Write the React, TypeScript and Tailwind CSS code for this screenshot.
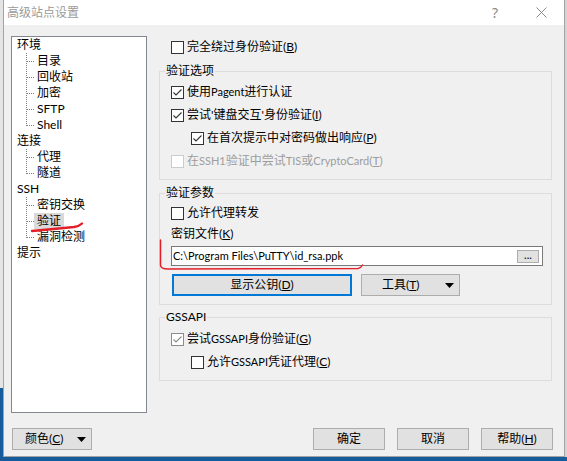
import type { ReactNode } from 'react'

const TREE = [
  { label: '环境', children: ['目录', '回收站', '加密', 'SFTP', 'Shell'] },
  { label: '连接', children: ['代理', '隧道'] },
  { label: 'SSH', children: ['密钥交换', '验证', '漏洞检测'] },
  { label: '提示', children: [] as string[] },
]

const SELECTED = '验证'

export default function App() {
  return (
    <div className="flex h-[461px] w-[567px] flex-col overflow-hidden bg-[#165c9c] font-['Lato','Noto_Sans_CJK_SC',sans-serif] text-[12px] text-black">
      <div className="flex h-[457px]">
        <div className="flex w-[3px] flex-col">
          <div className="h-[388px] bg-[#e4e4e4]" />
          <div className="flex-1 bg-[#165c9c]" />
        </div>
        <div className="flex w-[562px] flex-col border-x border-b border-[#a3a3a3] bg-[#f0f0f0]">
          <TitleBar />
          <div className="flex flex-1 flex-col pl-[7px] pr-[11px] pt-[11px]">
            <div className="flex">
              <Tree />
              <AuthPanel />
            </div>
            <div className="mt-[15px] flex items-center">
              <button
                type="button"
                className="ml-[1px] flex h-[22px] w-[80px] items-center border border-[#adadad] bg-[#e1e1e1] pl-[12px] pr-[5px]"
              >
                <span>
                  颜色(<u>C</u>)
                </span>
                <DropArrow className="ml-auto" />
              </button>
              <div className="ml-auto flex gap-[12px]">
                <DialogButton>确定</DialogButton>
                <DialogButton>取消</DialogButton>
                <DialogButton>
                  帮助(<u>H</u>)
                </DialogButton>
              </div>
            </div>
          </div>
        </div>
        <div className="flex-1 bg-[#d4d4d4]" />
      </div>
    </div>
  )
}

function TitleBar() {
  return (
    <div className="flex h-[25px] items-center bg-white">
      <span className="pl-[3px] text-[#9a9a9a]">高级站点设置</span>
      <div className="ml-auto flex h-full">
        <div className="flex w-[46px] items-center justify-center font-['Noto_Sans',sans-serif] text-[14px] text-[#8a8a8a]">?</div>
        <div className="flex w-[46px] items-center justify-center">
          <svg width="11" height="11" viewBox="0 0 11 11">
            <path d="M0.5 0.5 L10.5 10.5 M10.5 0.5 L0.5 10.5" stroke="#8a8a8a" strokeWidth="1" />
          </svg>
        </div>
      </div>
    </div>
  )
}

function Tree() {
  return (
    <div className="relative h-[377px] w-[136px] shrink-0 border border-[#828790] bg-white pl-[5px] leading-[16px]">
      {TREE.map((node) => (
        <div key={node.label}>
          <div className="h-[16px]">{node.label}</div>
          {node.children.map((child, i) => (
            <div key={child} className="flex h-[16px]">
              <Connector last={i === node.children.length - 1} />
              <span className={`px-[3px] ${child === SELECTED ? 'bg-[#d9d9d9]' : ''}`}>{child}</span>
            </div>
          ))}
        </div>
      ))}
      {/* red pen mark under the selected node */}
      <svg className="absolute left-[18px] top-[185px]" width="56" height="12" viewBox="0 0 56 12">
        <path
          d="M2 9 Q 24 6.8, 44 5 Q 49 4.4, 52 1.5"
          fill="none"
          stroke="#e3202a"
          strokeWidth="2.4"
          strokeLinecap="round"
        />
      </svg>
    </div>
  )
}

function Connector({ last }: { last: boolean }) {
  return (
    <svg width="17" height="16" viewBox="0 0 17 16" shapeRendering="crispEdges" className="shrink-0">
      <line x1="9.5" y1="0" x2="9.5" y2={last ? 9 : 16} stroke="#7f7f7f" strokeDasharray="1 1" />
      <line x1="10" y1="8.5" x2="17" y2="8.5" stroke="#7f7f7f" strokeDasharray="1 1" />
    </svg>
  )
}

// latin runs inside chinese labels render a touch smaller
function Latin({ children }: { children: ReactNode }) {
  return <span className="text-[11px]">{children}</span>
}

function AuthPanel() {
  return (
    <div className="relative ml-[12px] flex w-[393px] flex-col pt-[3px]">
      <CheckRow className="pl-[12px]">
        完全绕过身份验证(<u>B</u>)
      </CheckRow>

      <Group title="验证选项" className="mt-[8px]" bodyClassName="gap-[7px] pb-[10px] pt-[5px]">
        <CheckRow checked>
          使用<Latin>Pagent</Latin>进行认证
        </CheckRow>
        <CheckRow checked>
          尝试&apos;键盘交互&apos;身份验证(<u>I</u>)
        </CheckRow>
        <CheckRow checked className="pl-[20px]">
          在首次提示中对密码做出响应(<u>P</u>)
        </CheckRow>
        <CheckRow disabled>
          在<Latin>SSH1</Latin>验证中尝试<Latin>TIS</Latin>或<Latin>CryptoCard</Latin>(<u>T</u>)
        </CheckRow>
      </Group>

      <Group title="验证参数" className="mt-[5px]" bodyClassName="pb-[8px] pt-[4px]">
        <CheckRow>允许代理转发</CheckRow>
        <div className="mt-[5px] h-[16px] leading-[16px]">
          密钥文件(<u>K</u>)
        </div>
        <div className="mt-[4px] flex h-[20px] w-[372px] items-center border border-[#7a7a7a] bg-white pl-[1px] pr-[3px]">
          <span className="text-[11px]">C:\Program Files\PuTTY\id_rsa.ppk</span>
          <button
            type="button"
            className="ml-auto flex h-[13px] w-[22px] items-center justify-center border border-[#adadad] bg-[#e1e1e1] pb-[4px] text-[11px] leading-none"
          >
            ...
          </button>
        </div>
        <div className="mt-[8px] flex gap-[9px]">
          <button
            type="button"
            className="ml-[1px] flex h-[22px] w-[180px] items-center justify-center border-2 border-[#0078d7] bg-[#e1e1e1]"
          >
            显示公钥(<u>D</u>)
          </button>
          <button
            type="button"
            className="flex h-[22px] w-[99px] items-center border border-[#adadad] bg-[#e1e1e1] pl-[20px] pr-[5px]"
          >
            <span>
              工具(<u>T</u>)
            </span>
            <DropArrow className="ml-auto" />
          </button>
        </div>
      </Group>

      <Group title="GSSAPI" className="mt-[4px]" bodyClassName="gap-[7px] pb-[10px] pt-[6px]">
        <CheckRow checked muted>
          尝试<Latin>GSSAPI</Latin>身份验证(<u>G</u>)
        </CheckRow>
        <CheckRow className="pl-[20px]">
          允许<Latin>GSSAPI</Latin>凭证代理(<u>C</u>)
        </CheckRow>
      </Group>

      {/* red pen bracket around the key file field */}
      <svg className="absolute left-0 top-[200px]" width="210" height="40" viewBox="0 0 210 40">
        <path
          d="M1.5 4 L1.5 29 Q1.5 33 9 33 L199 32.5 Q202 32 203.5 29"
          fill="none"
          stroke="#e3202a"
          strokeWidth="1.5"
          strokeLinecap="round"
        />
      </svg>
    </div>
  )
}

function Group({
  title,
  className = '',
  bodyClassName = '',
  children,
}: {
  title: string
  className?: string
  bodyClassName?: string
  children: ReactNode
}) {
  return (
    <fieldset className={`m-0 min-w-0 border border-[#dcdcdc] p-0 ${className}`}>
      <legend className="ml-[5px] h-[16px] px-[1px] leading-[16px]">{title}</legend>
      <div className={`flex flex-col pl-[11px] pr-[8px] ${bodyClassName}`}>{children}</div>
    </fieldset>
  )
}

function CheckRow({
  checked = false,
  disabled = false,
  muted = false,
  className = '',
  children,
}: {
  checked?: boolean
  disabled?: boolean
  muted?: boolean
  className?: string
  children: ReactNode
}) {
  return (
    <div className={`flex h-[16px] items-center gap-[3px] leading-[16px] ${className}`}>
      <CheckBox checked={checked} disabled={disabled} muted={muted} />
      <span className={disabled ? 'text-[#9d9d9d]' : ''}>{children}</span>
    </div>
  )
}

function CheckBox({ checked, disabled, muted }: { checked: boolean; disabled: boolean; muted: boolean }) {
  const tone = disabled ? '#cccccc' : muted ? '#8c8c8c' : '#333333'
  return (
    <span
      className={`flex h-[13px] w-[13px] shrink-0 items-center justify-center border bg-white ${
        disabled ? 'border-[#cccccc]' : muted ? 'border-[#8c8c8c]' : 'border-[#333333]'
      }`}
    >
      {checked && (
        <svg width="11" height="11" viewBox="0 0 11 11">
          <path d="M1.5 5.5 L4 8 L9.5 2.5" fill="none" stroke={tone} strokeWidth="1.1" />
        </svg>
      )}
    </span>
  )
}

function DialogButton({ children }: { children: ReactNode }) {
  return (
    <button
      type="button"
      className="flex h-[22px] w-[72px] items-center justify-center border border-[#adadad] bg-[#e1e1e1]"
    >
      {children}
    </button>
  )
}

function DropArrow({ className = '' }: { className?: string }) {
  return (
    <svg width="9" height="5" viewBox="0 0 9 5" className={className}>
      <path d="M0 0 L9 0 L4.5 5 Z" fill="#000" />
    </svg>
  )
}
